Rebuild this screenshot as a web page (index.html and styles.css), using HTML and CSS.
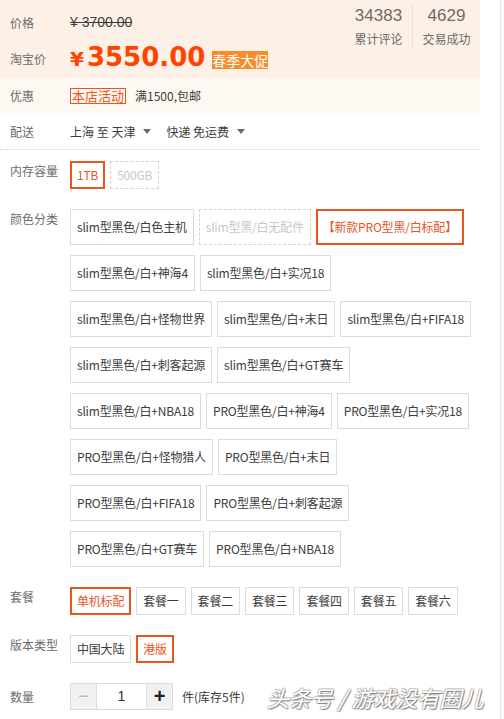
FILE: index.html
```html
<!DOCTYPE html>
<html lang="zh-CN">
<head>
<meta charset="utf-8">
<title>商品详情</title>
<link rel="stylesheet" href="styles.css">
</head>
<body>
<div class="page">
  <div class="detail">
    <div class="price-box">
      <div class="price-rows">
        <div class="price-row row-orig">
          <span class="label">价格</span>
          <del class="orig">¥ 3700.00</del>
        </div>
        <div class="price-row row-now">
          <span class="label">淘宝价</span>
          <strong class="now"><span class="yen">¥</span>3550.00</strong>
          <span class="promo-tag">春季大促</span>
        </div>
      </div>
      <div class="stats">
        <div class="stat"><b>34383</b><span>累计评论</span></div>
        <div class="stat stat-sep"><b>4629</b><span>交易成功</span></div>
      </div>
    </div>

    <div class="promo-row">
      <span class="label">优惠</span>
      <span class="shop-tag">本店活动</span>
      <span class="promo-text">满1500,包邮</span>
    </div>

    <div class="delivery-row">
      <span class="label">配送</span>
      <span class="route">上海 至 天津</span><i class="caret"></i>
      <span class="ship">快递 免运费</span><i class="caret"></i>
    </div>

    <div class="sku">
      <div class="sku-row">
        <span class="label">内存容量</span>
        <div class="opts">
          <span class="opt on">1TB</span>
          <span class="opt off">500GB</span>
        </div>
      </div>

      <div class="sku-row">
        <span class="label">颜色分类</span>
        <div class="opts">
          <span class="opt tall">slim型黑色/白色主机</span>
          <span class="opt tall off">slim型黑/白无配件</span>
          <span class="opt tall on">【新款PRO型黑/白标配】</span>
          <i class="break"></i>
          <span class="opt tall">slim型黑色/白+神海4</span>
          <span class="opt tall">slim型黑色/白+实况18</span>
          <i class="break"></i>
          <span class="opt tall">slim型黑色/白+怪物世界</span>
          <span class="opt tall">slim型黑色/白+末日</span>
          <span class="opt tall">slim型黑色/白+FIFA18</span>
          <i class="break"></i>
          <span class="opt tall">slim型黑色/白+刺客起源</span>
          <span class="opt tall">slim型黑色/白+GT赛车</span>
          <i class="break"></i>
          <span class="opt tall">slim型黑色/白+NBA18</span>
          <span class="opt tall">PRO型黑色/白+神海4</span>
          <span class="opt tall">PRO型黑色/白+实况18</span>
          <i class="break"></i>
          <span class="opt tall">PRO型黑色/白+怪物猎人</span>
          <span class="opt tall">PRO型黑色/白+末日</span>
          <i class="break"></i>
          <span class="opt tall">PRO型黑色/白+FIFA18</span>
          <span class="opt tall">PRO型黑色/白+刺客起源</span>
          <i class="break"></i>
          <span class="opt tall">PRO型黑色/白+GT赛车</span>
          <span class="opt tall">PRO型黑色/白+NBA18</span>
        </div>
      </div>

      <div class="sku-row">
        <span class="label">套餐</span>
        <div class="opts">
          <span class="opt on">单机标配</span>
          <span class="opt">套餐一</span>
          <span class="opt">套餐二</span>
          <span class="opt">套餐三</span>
          <span class="opt">套餐四</span>
          <span class="opt">套餐五</span>
          <span class="opt">套餐六</span>
        </div>
      </div>

      <div class="sku-row">
        <span class="label">版本类型</span>
        <div class="opts">
          <span class="opt">中国大陆</span>
          <span class="opt on">港版</span>
        </div>
      </div>

      <div class="qty-row">
        <span class="label">数量</span>
        <div class="stepper">
          <span class="step minus">−</span>
          <span class="qty">1</span>
          <span class="step plus">+</span>
        </div>
        <span class="stock">件(库存5件)</span>
      </div>
    </div>
  </div>
  <div class="watermark">头条号 / 游戏没有圈儿</div>
</div>
</body>
</html>
```
FILE: styles.css
```css
body {
  margin: 0;
  font-family: "Noto Sans CJK SC", "Noto Sans", sans-serif;
  font-size: 12px;
  color: #3c3c3c;
  background: #fff;
  text-spacing-trim: space-all;
}

.page {
  position: relative;
  width: 500px;
  height: 719px;
  overflow: hidden;
  border-right: 1px solid #e9e9e9;
}

.detail {
  width: 480px;
}

.label {
  flex-shrink: 0;
  width: 60px;
  padding-left: 10px;
  color: #6c6c6c;
}

/* price block */
.price-box {
  display: flex;
  justify-content: space-between;
  height: 78px;
  background: #fdf0e6;
}

.price-rows {
  padding-top: 12px;
}

.price-row {
  display: flex;
  align-items: center;
}

.row-orig {
  height: 20px;
}

.orig {
  font-family: "Liberation Sans", Arial, sans-serif;
  font-size: 14px;
  color: #3c3c3c;
}

.row-now {
  height: 32px;
  margin-top: 10px;
}

.now {
  font-family: "DejaVu Sans", sans-serif;
  font-weight: bold;
  font-size: 26px;
  line-height: 32px;
  color: #ff4400;
}

.yen {
  font-size: 20px;
  margin-right: 3px;
}

.promo-tag {
  align-self: flex-start;
  margin: 9px 0 0 7px;
  height: 18px;
  line-height: 18px;
  font-size: 14px;
  color: #fff;
  background: #f78d2a;
}

.stats {
  display: flex;
  height: 42px;
  margin-top: 5px;
}

.stat {
  display: flex;
  flex-direction: column;
  align-items: center;
  width: 67px;
  color: #6c6c6c;
}

.stat-sep {
  border-left: 1px solid #f3dfd2;
}

.stat b {
  font-family: "Liberation Sans", Arial, sans-serif;
  font-weight: normal;
  font-size: 17px;
  line-height: 22px;
}

.stat span {
  margin-top: 4px;
  line-height: 16px;
}

/* promo */
.promo-row {
  display: flex;
  align-items: center;
  height: 35px;
  background: #fef8f3;
}

.shop-tag {
  padding: 0 1px;
  border: 1px solid #f0521c;
  font-size: 13px;
  line-height: 14px;
  color: #f0521c;
}

.promo-text {
  margin-left: 9px;
}

/* delivery */
.delivery-row {
  display: flex;
  align-items: center;
  height: 36px;
  border-bottom: 1px dotted #cfcfcf;
}

.caret {
  width: 0;
  height: 0;
  margin: 1px 0 0 8px;
  border-top: 5px solid #6c6c6c;
  border-left: 4px solid transparent;
  border-right: 4px solid transparent;
}

.ship {
  margin-left: 15px;
}

/* sku options */
.sku {
  padding-top: 11px;
}

.sku-row {
  display: flex;
  margin-bottom: 10px;
}

.sku-row .label {
  line-height: 20px;
}

.opts {
  display: flex;
  flex-wrap: wrap;
  flex: 1;
}

.break {
  flex-basis: 100%;
  height: 0;
}

.opt {
  box-sizing: border-box;
  height: 28px;
  margin: 0 5px 10px 0;
  padding: 0 6px;
  border: 1px solid #dcdcdc;
  line-height: 26px;
  letter-spacing: -0.2px;
  white-space: nowrap;
  color: #3c3c3c;
  background: #fff;
}

.opt.tall {
  height: 36px;
  line-height: 34px;
}

.opt.off {
  border-style: dashed;
  border-color: #d4d4d4;
  color: #c8c8c8;
}

.opt.on {
  padding: 0 5px;
  border: 2px solid #e8551f;
  line-height: 24px;
  color: #e8551f;
}

.opt.tall.on {
  line-height: 32px;
}

/* quantity */
.qty-row {
  display: flex;
  align-items: center;
}

.stepper {
  display: flex;
  height: 27px;
}

.step {
  box-sizing: border-box;
  display: flex;
  align-items: center;
  justify-content: center;
  width: 27px;
  height: 27px;
  border: 1px solid #dcdcdc;
  background: #f1f1f1;
  font-family: "Liberation Sans", Arial, sans-serif;
}

.minus {
  font-size: 18px;
  color: #bdbdbd;
}

.plus {
  font-size: 20px;
  font-weight: bold;
  color: #222;
}

.qty {
  box-sizing: border-box;
  width: 49px;
  height: 27px;
  border-top: 1px solid #dcdcdc;
  border-bottom: 1px solid #dcdcdc;
  text-align: center;
  line-height: 25px;
  font-family: "Liberation Sans", Arial, sans-serif;
  font-size: 14px;
  color: #333;
}

.stock {
  margin-left: 9px;
  color: #3c3c3c;
}

.watermark {
  position: absolute;
  left: 267px;
  top: 683px;
  font-size: 22px;
  line-height: 28px;
  font-style: oblique;
  color: #fff;
  text-shadow: 1px 1px 1px #7a7a7a, -1px -1px 0 #c8c8c8, 1px -1px 0 #c8c8c8, -1px 1px 0 #c8c8c8;
  white-space: nowrap;
}
```
